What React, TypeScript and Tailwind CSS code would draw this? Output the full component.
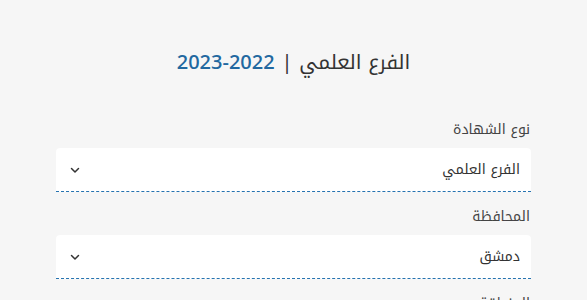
import React from "react";

const font = { fontFamily: '"Noto Kufi Arabic", "Noto Sans Arabic", "Noto Sans", "DejaVu Sans", sans-serif' };

function Chevron() {
  return (
    <svg width="12" height="12" viewBox="0 0 12 12" fill="none" className="text-[#333]">
      <path d="M2.5 4.5 L6 8 L9.5 4.5" stroke="currentColor" strokeWidth="1.5" strokeLinecap="round" strokeLinejoin="round" />
    </svg>
  );
}

function Field({ label, value }: { label: string; value: string }) {
  return (
    <div className="flex flex-col">
      <div className="text-[14px] text-[#444] leading-[20px] mb-[8px] pr-[1px]">{label}</div>
      <div className="flex items-center justify-between h-[44px] bg-white rounded-t-[4px] border-b border-dashed border-[#2673b0] pr-[11px] pl-[13px]">
        <span className="text-[14px] text-[#333]">{value}</span>
        <Chevron />
      </div>
    </div>
  );
}

export default function App() {
  return (
    <div dir="rtl" style={font} className="w-[587px] h-[300px] overflow-hidden bg-[#f6f6f6]">
      <div className="pt-[48px] text-center text-[20px] leading-[28px] text-[#333]">
        الفرع العلمي | <span className="text-[#2268a0] font-medium">2022-2023</span>
      </div>
      <div className="mx-[56px] mt-[44px] flex flex-col gap-[15px]">
        <Field label="نوع الشهادة" value="الفرع العلمي" />
        <Field label="المحافظة" value="دمشق" />
        <Field label="المنطقة" value="" />
      </div>
    </div>
  );
}
